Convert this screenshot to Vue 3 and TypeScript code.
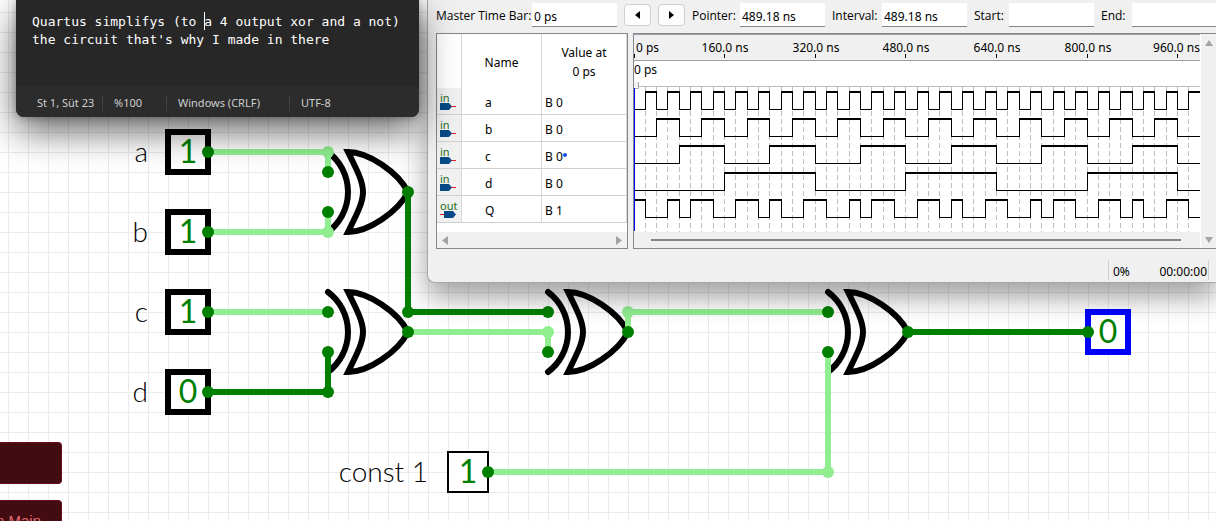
<script setup lang="ts">
import { computed, reactive, ref } from 'vue'

type Bit = 0 | 1
type PinName = 'a' | 'b' | 'c' | 'd' | 'k'

interface Pin {
  name: PinName
  label: string
  constant?: boolean
}

const pins: Pin[] = [
  { name: 'a', label: 'a' },
  { name: 'b', label: 'b' },
  { name: 'c', label: 'c' },
  { name: 'd', label: 'd' },
  { name: 'k', label: 'const 1', constant: true },
]

const bits = reactive<Record<PinName, Bit>>({ a: 1, b: 1, c: 1, d: 0, k: 1 })
const toggle = (name: PinName) => {
  if (name !== 'k') bits[name] = bits[name] ? 0 : 1
}

const ab = computed(() => bits.a ^ bits.b)
const cd = computed(() => bits.c ^ bits.d)
const abcd = computed(() => ab.value ^ cd.value)
const out = computed(() => abcd.value ^ bits.k)

const wires = computed(() => [
  { d: 'M208 152H328V172', on: bits.a, joints: [[328, 152]] },
  { d: 'M208 232H328V212', on: bits.b, joints: [[328, 232]] },
  { d: 'M208 312H328', on: bits.c, joints: [] },
  { d: 'M208 392H328V352', on: bits.d, joints: [[328, 392]] },
  { d: 'M408 192V312H548', on: ab.value, joints: [[408, 312]] },
  { d: 'M408 332H548V352', on: cd.value, joints: [[548, 332]] },
  { d: 'M628 332V312H828', on: abcd.value, joints: [[628, 312]] },
  { d: 'M488 472H828V352', on: bits.k, joints: [[828, 472]] },
  { d: 'M908 332H1088', on: out.value, joints: [] },
])

const gates = [[368, 192], [368, 332], [588, 332], [868, 332]]
const nodes = [
  [208, 152], [208, 232], [208, 312], [208, 392], [488, 472],
  [328, 172], [328, 212], [328, 312], [328, 352],
  [408, 192], [408, 332], [548, 312], [548, 352], [628, 332],
  [828, 312], [828, 352], [908, 332], [1088, 332],
]

const note = ref("Quartus simplifys (to a 4 output xor and a not)\nthe circuit that's why I made in there")

const signals = [
  { name: 'a', value: 'B 0', level: (i: number) => i & 1 },
  { name: 'b', value: 'B 0', level: (i: number) => (i >> 1) & 1 },
  { name: 'c', value: 'B 0', marked: true, level: (i: number) => (i >> 2) & 1 },
  { name: 'd', value: 'B 0', level: (i: number) => (i >> 3) & 1 },
  {
    name: 'Q', value: 'B 1', output: true,
    level: (i: number) => 1 ^ ((i ^ (i >> 1) ^ (i >> 2) ^ (i >> 3)) & 1),
  },
]

const STEPS = 160
const stepX = (i: number) => Math.floor((i * 906) / 80)

const traces = signals.map((s, row) => {
  const top = 57 + row * 27
  let high = ''
  let low = ''
  let edge = ''
  for (let i = 0; i < STEPS; i++) {
    const x = stepX(i)
    const end = stepX(i + 1)
    if (s.level(i)) high += `M${x} ${top + 1}H${end + 1}`
    else low += `M${x} ${top + 18}.5H${end + 1}`
    if (i > 0 && s.level(i) !== s.level(i - 1)) edge += `M${x}.5 ${top}V${top + 19}`
  }
  return { name: s.name, high, low, edge }
})

const gridPath = Array.from({ length: STEPS }, (_, i) => `M${stepX(i + 1)}.5 53V198`).join('')
const ticks = Array.from({ length: 7 }, (_, i) => {
  const x = stepX(i * 8)
  if (i === 0) return { x, labelX: 2, anchor: 'start', text: '0 ps' }
  if (i === 6) return { x, labelX: '100%', anchor: 'end', text: '960.0 ns' }
  return { x, labelX: x + 1, anchor: 'middle', text: `${i * 160}.0 ns` }
})
const tickPath = ticks.map((t) => `M${t.x}.5 20V24`).join('')
const fields = reactive({ master: '0 ps', pointer: '489.18 ns', interval: '489.18 ns', start: '', end: '' })
</script>

<template>
  <main class="stage">
    <section class="circuit" aria-label="Circuit">
      <template v-for="p in pins" :key="p.name">
        <span class="pin-label" :class="p.name">{{ p.label }}</span>
        <button
          type="button"
          class="bit"
          :class="[p.name, { constant: p.constant }]"
          :aria-label="`${p.label} value ${bits[p.name]}`"
          @click="toggle(p.name)"
        >{{ bits[p.name] }}</button>
      </template>
      <output class="bit result">{{ out }}</output>

      <svg class="wiring" aria-hidden="true">
        <g v-for="(g, i) in gates" :key="i" class="gate" :transform="`translate(${g[0]} ${g[1]})`">
          <path d="M-20-40C0-40 30-20 40 0C30 20 0 40-20 40C0 0 0 0-20-40Z" />
          <path d="M-40-40A50 50 0 0 1-40 40" stroke-linecap="round" />
        </g>
        <g v-for="(w, i) in wires" :key="i" :class="w.on ? 'on' : 'off'">
          <path class="wire" :d="w.d" />
          <circle v-for="(j, n) in w.joints" :key="n" :cx="j[0]" :cy="j[1]" r="6" />
        </g>
        <g class="off">
          <circle v-for="(n, i) in nodes" :key="i" :cx="n[0]" :cy="n[1]" r="6" />
        </g>
      </svg>
    </section>

    <nav class="side">
      <button type="button" aria-label="Menu"></button>
      <button type="button">n Main</button>
    </nav>

    <section class="analyzer" aria-label="Waveform">
      <form class="toolbar" @submit.prevent>
        <label class="w-master" for="master">Master Time Bar:</label>
        <input id="master" v-model="fields.master" />
        <button type="button" aria-label="Previous"><svg width="5" height="8"><path d="M5 0V8L0 4Z" /></svg></button>
        <button type="button" aria-label="Next"><svg width="5" height="8"><path d="M0 0V8L5 4Z" /></svg></button>
        <label class="w-pointer" for="pointer">Pointer:</label>
        <input id="pointer" v-model="fields.pointer" />
        <label class="w-interval" for="interval">Interval:</label>
        <input id="interval" v-model="fields.interval" />
        <label class="w-start" for="start">Start:</label>
        <input id="start" v-model="fields.start" />
        <label class="w-end" for="end">End:</label>
        <input id="end" v-model="fields.end" class="grow" />
      </form>

      <div class="panels">
        <div class="names">
          <table>
            <thead>
              <tr><th></th><th>Name</th><th>Value at<br />0 ps</th></tr>
            </thead>
            <tbody>
              <tr v-for="s in signals" :key="s.name">
                <td class="kind">
                  <span>{{ s.output ? 'out' : 'in' }}</span>
                  <svg v-if="s.output" width="17" height="8">
                    <path d="M0 4.5H5" stroke="#ee1c24" /><path d="M4 1H13L16 4.5L13 8H4Z" fill="#074a86" />
                  </svg>
                  <svg v-else width="17" height="8">
                    <path d="M11 4.5H16" stroke="#ee1c24" /><path d="M0 1H9L12 4.5L9 8H0Z" fill="#074a86" />
                  </svg>
                </td>
                <td class="name">{{ s.name }}</td>
                <td>{{ s.value }}<i v-if="s.marked" class="mark"></i></td>
              </tr>
            </tbody>
          </table>
          <div class="scroll">
            <svg width="6" height="9"><path d="M6 0V9L0 4.5Z" /></svg>
            <svg width="6" height="9"><path d="M0 0V9L6 4.5Z" /></svg>
          </div>
        </div>

        <div class="waves">
          <div class="plot">
            <svg class="chart" role="img" aria-label="Signal traces over time">
              <rect width="100%" height="27" fill="#f0f0f0" />
              <rect width="100%" height="1" fill="#a0a0a0" />
              <rect y="26" width="100%" height="1" fill="#a0a0a0" />
              <rect y="52" width="100%" height="1" fill="#bdbdbd" />
              <path class="grid" :d="gridPath" />
              <path class="line" :d="tickPath" />
              <text v-for="t in ticks" :key="t.text" :x="t.labelX" y="18" :text-anchor="t.anchor">{{ t.text }}</text>
              <text x="0" y="40">0 ps</text>
              <path d="M0 48H4V53H0Z" fill="#f0f0f0" /><path d="M4.5 48V54.5H1" fill="none" stroke="#a8a8a8" />
              <g v-for="t in traces" :key="t.name">
                <path class="line thick" :d="t.high" />
                <path class="line" :d="t.low" />
                <path class="line" :d="t.edge" />
              </g>
              <rect y="54" width="1" height="143" fill="#0000ff" />
            </svg>
            <div class="track"><span></span></div>
          </div>
          <div class="vscroll">
            <svg width="8" height="6"><path d="M0 6L4 0L8 6Z" /></svg>
            <svg width="8" height="6"><path d="M0 0L4 6L8 0Z" /></svg>
          </div>
        </div>
      </div>

      <footer class="progress"><div><span>0%</span><span>00:00:00</span></div></footer>
    </section>

    <section class="editor" aria-label="Text editor">
      <div class="page">
        <textarea v-model="note" aria-label="Note" rows="2" spellcheck="false"></textarea>
        <i class="caret"></i>
      </div>
      <footer>
        <span class="s1">St 1, Süt 23</span>
        <span class="s2">%100</span>
        <span class="s3">Windows (CRLF)</span>
        <span>UTF-8</span>
      </footer>
    </section>
  </main>
</template>

<style>
body {
  overflow: hidden;
}
</style>

<style scoped>
.stage {
  position: relative;
  height: 100vh;
  overflow: hidden;
  background-color: #fff;
  background-image: linear-gradient(90deg, #ebebeb 1px, transparent 1px), linear-gradient(#ebebeb 1px, transparent 1px);
  background-size: 20px 20px;
  background-position: 8px 12px;
  font: 12px/16px "Noto Sans", "Open Sans", sans-serif;
  color: #000;
}
.stage * {
  box-sizing: border-box;
}
.circuit {
  position: absolute;
  inset: 0;
}
.wiring {
  position: absolute;
  inset: 0;
  width: 100%;
  height: 100%;
  pointer-events: none;
}
.gate path {
  fill: none;
  stroke: #000;
  stroke-width: 6;
}
.wire {
  fill: none;
  stroke-width: 6;
}
.on .wire { stroke: #90ee90; }
.off .wire { stroke: #008000; }
.on circle { fill: #90ee90; }
.off circle { fill: #008000; }
.bit {
  position: absolute;
  left: 165px;
  width: 46px;
  height: 46px;
  padding: 0 0 2px;
  border: 6px solid #000;
  background: #fff;
  color: #008000;
  font: 400 32px/32px Lato, sans-serif;
  text-align: center;
}
.bit.a { top: 129px; }
.bit.b { top: 209px; }
.bit.c { top: 289px; }
.bit.d { top: 369px; }
.bit.k { top: 451px; left: 447px; }
.bit.constant {
  width: 42px;
  height: 42px;
  border-width: 2px;
}
.bit.result {
  left: 1085px;
  top: 309px;
  border-color: #0000ff;
}
.pin-label {
  position: absolute;
  right: calc(100% - 148px);
  font: 300 28px/32px Lato, sans-serif;
  white-space: nowrap;
}
.pin-label.a { top: 135px; }
.pin-label.b { top: 215px; }
.pin-label.c { top: 295px; }
.pin-label.d { top: 375px; }
.pin-label.k { top: 455px; right: calc(100% - 428px); }

.side {
  position: absolute;
  left: 0;
  top: 442px;
  display: flex;
  flex-direction: column;
  gap: 16px;
}
.side button {
  width: 62px;
  height: 42px;
  padding: 0 20px 0 0;
  border: 1px solid #6a0d1a;
  border-left: 0;
  border-radius: 0 4px 4px 0;
  background: #420c12;
  color: #e46a6f;
  font: 15px/18px "Liberation Sans", sans-serif;
  display: flex;
  align-items: center;
  justify-content: flex-end;
  white-space: nowrap;
}

.analyzer {
  position: absolute;
  left: 427px;
  right: 0;
  top: 0;
  padding-left: 8px;
  background: #f0f0f0;
  border: 1px solid #a6a6a6;
  border-width: 0 0 1px 1px;
  border-radius: 0 0 0 8px;
  box-shadow: 0 14px 28px rgba(0, 0, 0, 0.38);
}
.toolbar {
  display: flex;
  align-items: center;
  gap: 7px;
  height: 33px;
  padding-bottom: 3px;
  overflow: hidden;
}
.toolbar label {
  flex: none;
  padding-top: 2px;
  font-family: "Open Sans", "Noto Sans", sans-serif;
  white-space: nowrap;
}
.w-master { width: 89px; }
.w-pointer { width: 41px; }
.w-interval { width: 43px; }
.w-start { width: 28px; }
.w-end { width: 24px; }
.toolbar input {
  flex: none;
  width: 85px;
  height: 24px;
  padding: 3px 2px 0;
  border: 0;
  border-bottom: 1px solid #868686;
  background: #fff;
  font: inherit;
}
.toolbar input.grow { flex: 1; }
.toolbar button {
  flex: none;
  width: 27px;
  height: 22px;
  padding: 0;
  border: 1px solid #cfcfcf;
  border-radius: 4px;
  background: #fdfdfd;
  display: flex;
  align-items: center;
  justify-content: center;
}
.panels {
  display: flex;
  gap: 5px;
}
.names {
  display: flex;
  flex-direction: column;
  justify-content: space-between;
  width: 192px;
  border: 1px solid #828790;
  background: #fff;
}
table {
  width: 100%;
  table-layout: fixed;
  border-collapse: separate;
  border-spacing: 0;
}
th, td {
  padding: 4px 0 0 3px;
  border-right: 1px solid #d8d8d8;
  text-align: left;
}
th {
  height: 54px;
  padding: 2px 0 0;
  font-weight: 400;
  line-height: 19px;
  text-align: center;
}
th:first-child { width: 25px; }
th:nth-child(2) { width: 80px; }
td {
  height: 27px;
  border-bottom: 1px solid #d0d0d0;
}
td.name { padding-left: 23px; }
td.kind {
  padding-top: 0;
  background: #f0f0f0;
  color: #1e6b22;
  font-size: 11px;
  line-height: 9px;
}
.kind span, .kind svg { display: block; }
.mark {
  display: inline-block;
  width: 4px;
  height: 4px;
  border-radius: 2px;
  background: #1450e0;
  vertical-align: 4px;
}
.scroll {
  display: flex;
  align-items: center;
  justify-content: space-between;
  height: 16px;
  padding: 0 5px;
  background: #f0f0f0;
}
.scroll path, .vscroll path { fill: #a3a3a3; }
.waves {
  flex: 1;
  min-width: 0;
  display: flex;
  border: 1px solid #828790;
  border-right: 0;
}
.plot {
  flex: 1;
  min-width: 0;
  background: #fff;
}
.chart {
  display: block;
  width: 100%;
  height: 198px;
}
.chart text {
  font-size: 12px;
}
.line {
  fill: none;
  stroke: #000;
}
.thick { stroke-width: 2; }
.grid {
  stroke: #bdbdbd;
  stroke-dasharray: 5 3;
}
.track {
  display: flex;
  align-items: center;
  height: 16px;
  padding: 0 19px 0 17px;
  background: #f0f0f0;
}
.track span {
  flex: 1;
  height: 2px;
  background: #858585;
}
.vscroll {
  display: flex;
  flex-direction: column;
  align-items: center;
  justify-content: space-between;
  width: 16px;
  padding: 6px 0 5px;
  border-left: 1px solid #fff;
  background: #f0f0f0;
}
.progress {
  display: flex;
  justify-content: flex-end;
  height: 33px;
  padding: 11px 7px 2px 0;
}
.progress div {
  display: flex;
  align-items: center;
  justify-content: space-between;
  width: 101px;
  padding: 4px 1px 0 4px;
  border: 1px solid #d0d0d0;
  border-width: 0 1px;
}

.editor {
  position: absolute;
  left: 16px;
  top: 0;
  width: 403px;
  border-radius: 0 0 8px 8px;
  background: #272727;
  box-shadow: 0 14px 36px rgba(0, 0, 0, 0.6), 0 0 8px rgba(0, 0, 0, 0.3);
}
.page {
  position: relative;
  height: 86px;
  padding: 13px 0 0 16px;
}
textarea {
  display: block;
  width: 100%;
  height: 40px;
  padding: 0;
  border: 0;
  outline: 0;
  resize: none;
  overflow: hidden;
  background: transparent;
  color: #fff;
  font: 13px/18px "DejaVu Sans Mono", monospace;
  white-space: pre;
}
.caret {
  position: absolute;
  left: 188px;
  top: 12px;
  width: 1px;
  height: 18px;
  background: #fff;
}
.editor footer {
  display: flex;
  align-items: center;
  height: 31px;
  padding: 2px 0 0 21px;
  border-radius: 0 0 8px 8px;
  background: #2c2c2c;
  color: #cfcfcf;
  font-size: 11px;
}
.editor footer span {
  margin-right: 11px;
  white-space: nowrap;
}
.s1 { width: 66px; border-right: 1px solid #434343; }
.s2 { width: 53px; border-right: 1px solid #434343; }
.s3 { width: 112px; border-right: 1px solid #434343; }
</style>
